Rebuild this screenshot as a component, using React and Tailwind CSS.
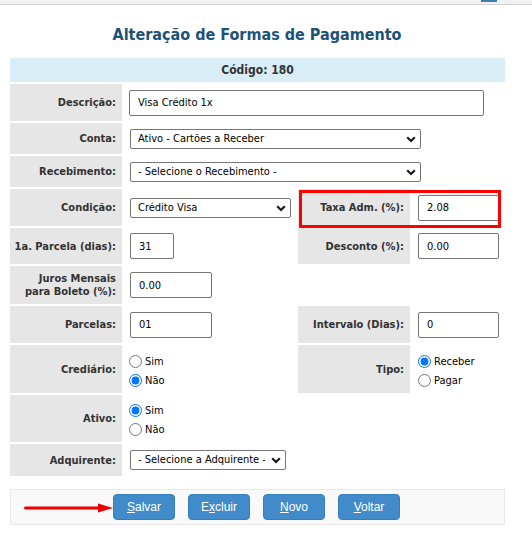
import React from "react";

const FONT = "font-['DejaVu_Sans_Condensed','DejaVu_Sans',sans-serif]";

function Label({ children }) {
  return (
    <div className="bg-[#e6e6e6] flex items-center justify-end pr-[6px] text-right font-bold text-[11px] leading-[13px] text-[#333333]">
      <div>{children}</div>
    </div>
  );
}

function Cell({ children, span }) {
  return (
    <div className={`flex items-center pl-[6px] ${span ? "col-span-3" : ""}`}>
      {children}
    </div>
  );
}

function Empty() {
  return <div className="col-span-2"></div>;
}

function Input({ value, className }) {
  return (
    <input
      readOnly
      value={value}
      className={`block h-[26px] border border-[#767676] rounded-[2px] bg-white px-[8px] text-[11px] text-black outline-none ${className}`}
    />
  );
}

function Chevron() {
  return (
    <svg
      className="absolute right-[5px] top-[7px] pointer-events-none"
      width="10"
      height="7"
      viewBox="0 0 10 7"
    >
      <path d="M1.2 1.2 L5 5 L8.8 1.2" fill="none" stroke="#1a1a1a" strokeWidth="2.2" />
    </svg>
  );
}

function Select({ value, className }) {
  return (
    <div className={`relative h-[20px] ${className}`}>
      <select
        defaultValue={value}
        className="block appearance-none w-full h-[20px] border border-[#767676] rounded-[2px] bg-white pl-[7px] pr-[20px] py-0 text-[11px] leading-[18px] text-black outline-none"
      >
        <option>{value}</option>
      </select>
      <Chevron />
    </div>
  );
}

function Radio({ name, label, checked }) {
  return (
    <label className="flex items-center gap-[3px] text-[11px] leading-[19px] text-black">
      <input
        type="radio"
        name={name}
        defaultChecked={checked}
        className="m-0 w-[13px] h-[13px]"
      />
      <span>{label}</span>
    </label>
  );
}

function Btn({ children }) {
  return (
    <button className="w-[62px] h-[26px] bg-[#428bca] border border-[#357ebd] rounded-[4px] text-white text-[12px] font-['Liberation_Sans',Arial,sans-serif]">
      {children}
    </button>
  );
}

export default function App() {
  return (
    <div className={`relative w-[532px] h-[541px] bg-white ${FONT}`}>
      <div className="h-[5px] bg-[#f1f1f1] border-b border-[#d4d4d4] flex justify-end pr-[35px]">
        <div className="w-[16px] h-[2px] bg-[#3c7fb1]"></div>
      </div>
      <div className="pt-[20px] mb-[13px] h-[40px] flex justify-center">
        <h1 className="text-[16px] leading-[20px] font-bold text-[#1d5277] pr-[18px]">
          Alteração de Formas de Pagamento
        </h1>
      </div>

      <div className="relative ml-[10px] w-[495px] grid grid-cols-[112px_172px_112px_93px] grid-rows-[24px_37px_31px_31px_37px_36px_38px_37px_48px_47px_32px] gap-[2px]">
        <div className="col-span-4 bg-[#d9edf7] flex items-center justify-center font-bold text-[12px] text-[#333333]">
          Código: 180
        </div>

        <Label>Descrição:</Label>
        <Cell span>
          <Input value="Visa Crédito 1x" className="w-[355px] -ml-[1px]" />
        </Cell>

        <Label>Conta:</Label>
        <Cell span>
          <Select value="Ativo - Cartões a Receber" className="w-[291px]" />
        </Cell>

        <Label>Recebimento:</Label>
        <Cell span>
          <Select value="- Selecione o Recebimento -" className="w-[291px]" />
        </Cell>

        <Label>Condição:</Label>
        <Cell>
          <Select value="Crédito Visa" className="w-[161px]" />
        </Cell>
        <Label>Taxa Adm. (%):</Label>
        <Cell>
          <Input value="2.08" className="w-[81px]" />
        </Cell>

        <Label>1a. Parcela (dias):</Label>
        <Cell>
          <Input value="31" className="w-[44px]" />
        </Cell>
        <Label>Desconto (%):</Label>
        <Cell>
          <Input value="0.00" className="w-[81px]" />
        </Cell>

        <Label>
          Juros Mensais
          <br />
          para Boleto (%):
        </Label>
        <Cell>
          <Input value="0.00" className="w-[82px]" />
        </Cell>
        <Empty />

        <Label>Parcelas:</Label>
        <Cell>
          <Input value="01" className="w-[82px]" />
        </Cell>
        <Label>Intervalo (Dias):</Label>
        <Cell>
          <Input value="0" className="w-[81px]" />
        </Cell>

        <Label>Crediário:</Label>
        <div className="flex flex-col justify-center pl-[5px] pt-[3px]">
          <Radio name="crediario" label="Sim" />
          <Radio name="crediario" label="Não" checked />
        </div>
        <Label>Tipo:</Label>
        <div className="flex flex-col justify-center pl-[6px] pt-[3px]">
          <Radio name="tipo" label="Receber" checked />
          <Radio name="tipo" label="Pagar" />
        </div>

        <Label>Ativo:</Label>
        <div className="flex flex-col justify-center pl-[5px] pt-[3px]">
          <Radio name="ativo" label="Sim" checked />
          <Radio name="ativo" label="Não" />
        </div>
        <Empty />

        <Label>Adquirente:</Label>
        <Cell>
          <Select value="- Selecione a Adquirente -" className="w-[156px]" />
        </Cell>
        <Empty />

        <div className="absolute left-[289px] top-[132px] w-[202px] h-[38px] border-[3px] border-[#ff0000] pointer-events-none"></div>
      </div>

      <div className="mt-[13px] ml-[10px] w-[495px] h-[36px] border border-[#e8e8e8] bg-[#f9f9f9] flex items-center justify-center gap-[13px] pr-[2px]">
        <Btn>
          <u>S</u>alvar
        </Btn>
        <Btn>
          E<u>x</u>cluir
        </Btn>
        <Btn>
          <u>N</u>ovo
        </Btn>
        <Btn>
          <u>V</u>oltar
        </Btn>
      </div>

      <svg
        className="absolute left-[24px] top-[502px] pointer-events-none"
        width="90"
        height="12"
        viewBox="0 0 90 12"
      >
        <line x1="1.5" y1="6" x2="78" y2="6" stroke="#f00000" strokeWidth="3" strokeLinecap="round" />
        <polygon points="74,1.5 89,6 74,10.5" fill="#f00000" />
      </svg>
    </div>
  );
}
